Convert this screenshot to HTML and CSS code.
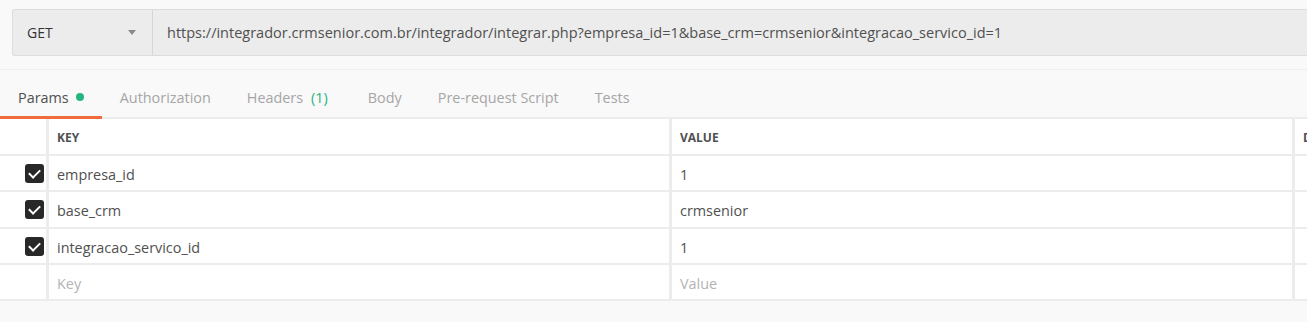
FILE: index.html
```html
<!DOCTYPE html>
<html lang="en">
  <head>
    <meta charset="utf-8" />
    <title>Request - Params</title>
    <link rel="stylesheet" href="styles.css">
  </head>
  <body>
    <div class="request-bar">
      <div class="request-box">
        <div class="method">
          <span>GET</span>
          <span class="caret"></span>
        </div>
        <div class="url">https://integrador.crmsenior.com.br/integrador/integrar.php?empresa_id=1&amp;base_crm=crmsenior&amp;integracao_servico_id=1</div>
      </div>
    </div>
    <div class="tabs">
      <div class="tab active">Params <span class="dot"></span></div>
      <div class="tab">Authorization</div>
      <div class="tab headers">Headers <span class="count">(1)</span></div>
      <div class="tab">Body</div>
      <div class="tab">Pre-request Script</div>
      <div class="tab">Tests</div>
    </div>
    <div class="params">
      <div class="row head">
        <div class="cell check"></div>
        <div class="cell">KEY</div>
        <div class="cell">VALUE</div>
        <div class="cell">DESCRIPTION</div>
      </div>
      <div class="row">
        <div class="cell check"><span class="box"></span></div>
        <div class="cell">empresa_id</div>
        <div class="cell">1</div>
        <div class="cell"></div>
      </div>
      <div class="row">
        <div class="cell check"><span class="box"></span></div>
        <div class="cell">base_crm</div>
        <div class="cell">crmsenior</div>
        <div class="cell"></div>
      </div>
      <div class="row">
        <div class="cell check"><span class="box"></span></div>
        <div class="cell">integracao_servico_id</div>
        <div class="cell">1</div>
        <div class="cell"></div>
      </div>
      <div class="row empty">
        <div class="cell check"></div>
        <div class="cell">Key</div>
        <div class="cell">Value</div>
        <div class="cell"></div>
      </div>
    </div>
  </body>
</html>
```

FILE: styles.css
```css
* {
  margin: 0;
  padding: 0;
  box-sizing: border-box;
  font-family: "Open Sans", "Liberation Sans", sans-serif;
}
body {
  background: #f9f9f9;
  width: 1307px;
  height: 322px;
  overflow: hidden;
  color: #505050;
  font-size: 14.4px;
}
.request-bar {
  padding: 9px 0 13px 12px;
  border-bottom: 1px solid #efefef;
}
.request-box {
  display: flex;
  height: 47px;
  background: #ececec;
  border: 1px solid #dcdcdc;
  border-right: none;
  border-radius: 3px 0 0 3px;
}
.method {
  width: 140px;
  display: flex;
  align-items: center;
  justify-content: space-between;
  padding: 0 16px 0 14px;
  border-right: 1px solid #d6d6d6;
  font-size: 14px;
  color: #333;
}
.caret {
  width: 0;
  height: 0;
  border-left: 4px solid transparent;
  border-right: 4px solid transparent;
  border-top: 5px solid #8a8a8a;
}
.url {
  display: flex;
  align-items: center;
  padding-left: 14px;
  font-size: 14.5px;
  color: #505050;
  white-space: nowrap;
}
.tabs {
  display: flex;
  height: 49px;
  border-bottom: 2px solid #ececec;
}
.tab {
  display: flex;
  align-items: center;
  padding: 8px 18px 0;
  font-size: 14.4px;
  color: #a6a6a6;
  border-bottom: 3px solid transparent;
  margin-bottom: -2px;
}
.tab.active {
  color: #505050;
  border-bottom-color: #f26b3a;
}
.tab.headers {
  padding-right: 22px;
}
.dot {
  display: inline-block;
  width: 8px;
  height: 8px;
  border-radius: 50%;
  background: #26b47f;
  margin-left: 7px;
}
.count {
  color: #26b47f;
  margin-left: 8px;
}
.params {
  background: #fff;
}
.row {
  display: grid;
  grid-template-columns: 46px 623px 623px 1fr;
  height: 36px;
  border-bottom: 2px solid #ececec;
}
.row.head {
  height: 37px;
}
.row:nth-child(3) {
  height: 37px;
}
.cell {
  display: flex;
  align-items: center;
  padding: 2px 0 0 8px;
  border-left: 3px solid #ececec;
  white-space: nowrap;
  overflow: hidden;
  color: #505050;
}
.cell.check {
  border-left: none;
  padding: 0 0 0 25px;
}
.head .cell {
  font-size: 12px;
  font-weight: 700;
  color: #505050;
}
.empty .cell {
  color: #b3b3b3;
}
.box {
  position: relative;
  width: 19px;
  height: 19px;
  border-radius: 3px;
  background: #282828;
}
.box::after {
  content: "";
  position: absolute;
  left: 6px;
  top: 3px;
  width: 5px;
  height: 9px;
  border: solid #fff;
  border-width: 0 2.5px 2.5px 0;
  transform: rotate(45deg);
}
```
